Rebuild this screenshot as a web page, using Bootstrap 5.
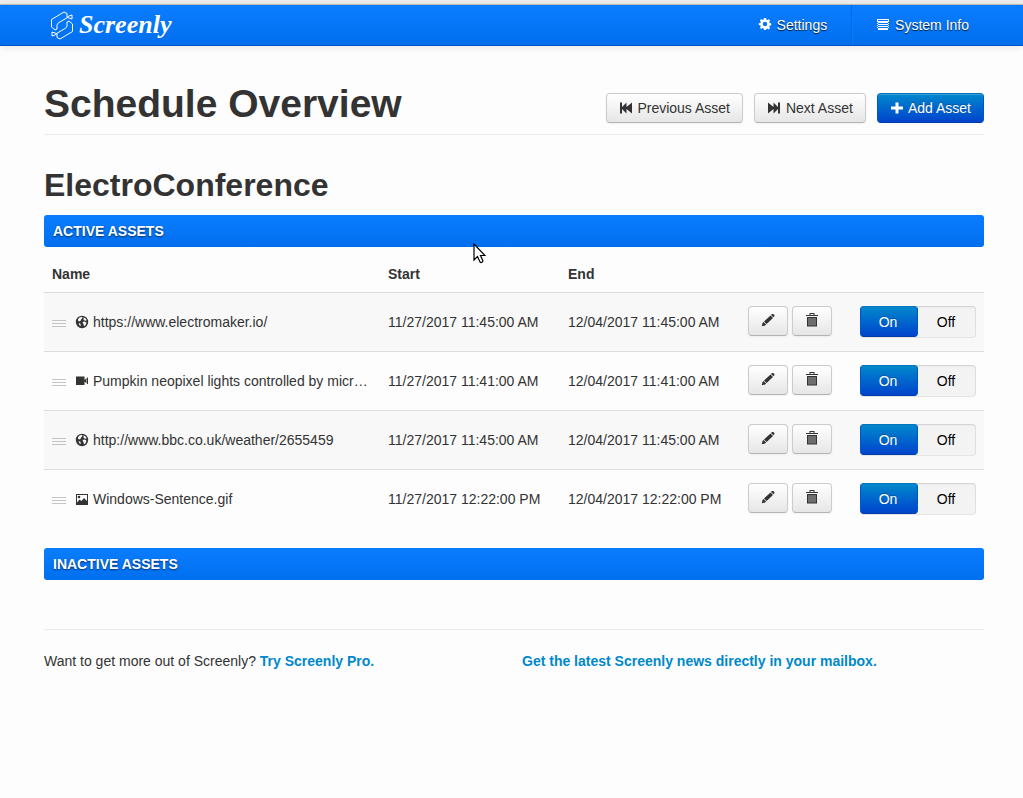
<!DOCTYPE html>
<html lang="en">
<head>
<meta charset="utf-8">
<meta name="viewport" content="width=device-width, initial-scale=1">
<title>Screenly - Schedule Overview</title>
<link rel="stylesheet" href="https://cdn.jsdelivr.net/npm/bootstrap@5.3.0/dist/css/bootstrap.min.css">
<style>
body { font-family: "Liberation Sans", Arial, sans-serif; font-size: 14px; line-height: 20px; color: #333; background: #fdfdfd; }
.page-wrap { padding-left: 44px; padding-right: 39px; }
.window-edge { height: 5px; background: #ededed; border-bottom: 1px solid #c3beb6; }
.topbar { height: 41px; background: linear-gradient(#0a7dff, #006fee); border-bottom: 1px solid #0052c4; box-shadow: 0 1px 8px rgba(0,0,0,.1); }
.topbar .nav-link { padding: 10px 15px; color: #fff; text-shadow: 0 1px 1px rgba(0,0,0,.8); }
.nav-split { width: 2px; margin: 0 9px; border-left: 1px solid #0069e4; border-right: 1px solid #0a7bfb; }
.brand { margin-left: 6px; color: #fff; gap: 5px; }
.brand-name { font: italic 700 26px/34px "Liberation Serif", serif; }
.ico { width: 14px; height: 14px; fill: currentColor; vertical-align: -2px; flex: none; }
.topbar .ico { vertical-align: -1px; margin-left: -1px; margin-right: 1px; }
.page-head { margin-top: 38px; padding-bottom: 10px; border-bottom: 1px solid #ebebeb; }
h1 { font-size: 39px; line-height: 40px; font-weight: 700; }
h2 { font-size: 32px; line-height: 40px; font-weight: 700; margin: 30px 0 10px; }
.head-actions { gap: 11px; margin-bottom: 1px; }
.head-actions .ico { margin-right: 1px; }
.btn { --bs-btn-font-size: 14px; --bs-btn-line-height: 20px; --bs-btn-padding-y: 4px; --bs-btn-padding-x: 12px; --bs-btn-border-radius: 4px; }
.btn-plain { --bs-btn-color: #333; --bs-btn-hover-color: #333; border-color: #ccc #ccc #b3b3b3; background: linear-gradient(#fff, #e6e6e6); box-shadow: inset 0 1px 0 #fff, 0 1px 2px rgba(0,0,0,.05); }
.btn-blue { --bs-btn-color: #fff; --bs-btn-hover-color: #fff; border-color: #0074bd #0055cc #003ca8; background: linear-gradient(#0088cc, #0044cc); text-shadow: 0 -1px 0 rgba(0,0,0,.25); box-shadow: inset 0 1px 0 rgba(255,255,255,.2); }
.section-bar { margin: 0; padding: 6px 9px; border-radius: 3px; font-size: 14px; line-height: 20px; font-weight: 700; color: #fff; background: linear-gradient(#0a7dff, #006fee); text-shadow: 0 1px 2px rgba(0,0,0,.6); }
.assets { table-layout: fixed; margin: 9px 0 19px; --bs-table-bg: transparent; color: #333; }
.assets th, .assets td { padding: 8px; vertical-align: middle; color: #333; border: 0; }
.assets tbody td { height: 59px; border-top: 1px solid #ddd; }
.assets tbody tr:nth-child(odd) td { background: #f8f8f8; }
.col-date { width: 180px; } .col-tools { width: 112px; } .col-state { width: 132px; }
.grip { width: 14px; height: 8px; fill: #c4c4c4; margin: 3px 9px 0 0; flex: none; }
.asset-name { margin-left: 4px; }
.tools { gap: 4px; margin-right: -8px; margin-bottom: 2px; }
.tools .ico { vertical-align: -1px; }
.switch { width: 116px; border-radius: 4px; background: #f3f3f3; box-shadow: inset 0 1px 2px rgba(0,0,0,.1), inset 0 0 0 1px rgba(0,0,0,.05); padding-bottom: 1px; }
.switch .btn { flex: 1 1 0; color: #000; padding: 5px 2px 4px 0; border-color: transparent; }
.switch .btn-check:checked + .btn { color: #fff; border-color: #0074bd #0055cc #003ca8; border-radius: 4px; background: linear-gradient(#0088cc, #0044cc); text-shadow: 0 -1px 0 rgba(0,0,0,.25); }
.pointer { left: 46%; top: 28px; width: 13px; height: 21px; margin-left: -3px; }
.foot { margin-top: 49px; padding-top: 21px; border-top: 1px solid #ebebeb; }
.foot a { color: #0088cc; font-weight: 700; text-decoration: none; }
</style>
</head>
<body>
<svg class="d-none" aria-hidden="true">
  <symbol id="gear" viewBox="0 0 14 14"><path fill-rule="evenodd" d="M6 1h2l.4 1.700 1 .4 1.500-.9 1.200 1.300-.9 1.400.5 1.100 1.500.4v1.900l-1.600.4-.4 1 .9 1.400-1.300 1.300-1.400-.9-1 .4L8 13H6l-.4-1.600-1-.4-1.500.9-1.200-1.300.9-1.400-.4-1L.8 7.900V6.300l1.600-.4.4-1-.9-1.500 1.300-1.300 1.400.9 1-.4zM7 4.800a2.200 2.200 0 1 0 0 4.400 2.200 2.200 0 0 0 0-4.400z"/></symbol>
  <symbol id="rows" viewBox="0 0 14 14"><path fill-rule="evenodd" d="M1 2h12v3H1zM2 3v1h10V3zM1 5h12v1H1zM1 7h12v1H1zM1 9h12v1H1zM1 11h12v2H1zM1 5h1v8H1zM12 5h1v8h-1z"/></symbol>
  <symbol id="back" viewBox="0 0 14 14"><path d="M1 1.500h2v4.600L7.500 1.500v4.600L13 1.500v11L7.500 7.900v4.600L3 7.900v4.600H1z"/></symbol>
  <symbol id="next" viewBox="0 0 14 14"><path d="M13 1.500h-2v4.600L6.500 1.500v4.600L1 1.500v11l5.500-4.600v4.600L11 7.900v4.600h2z"/></symbol>
  <symbol id="plus" viewBox="0 0 14 14"><path d="M5.500 1.500h3v4H13v3H8.500v4h-3v-4H1v-3h4.500z"/></symbol>
  <symbol id="globe" viewBox="0 0 14 14"><circle cx="7" cy="7" r="6.200"/><path fill="#f8f8f8" d="M4.500 2.500 7 1.800 7.500 3 6 4.500 5.500 6 4 6.500 3 5.500 3 4.300zM8.500 2.200l2.200 1.200 1 1.800-1.500.5-1.500-.7zM7.500 7l2.500-.5 1.500 1.200-1 2.500-1.500 1-.5-2zM3.500 8l2 .8L5.800 11 4.500 10.500z"/></symbol>
  <symbol id="video" viewBox="0 0 14 14"><path d="M1 2.500h8.500v8.500H1zM9.500 6l2-2v5.500l-2-2zM12 3.500h1V10h-1z"/></symbol>
  <symbol id="image" viewBox="0 0 14 14"><path fill-rule="evenodd" d="M1 2h12v11H1zM2 3v7.500l2.500-3 2 1.500L9 6l3 3V3zM4 3.700a1.300 1.300 0 1 1 0 2.600 1.300 1.300 0 0 1 0-2.600z"/></symbol>
  <symbol id="pencil" viewBox="0 0 14 14"><path d="M.8 13.200 1.500 10l1-1 2.600 2.500-1 1zM3 8.500 9.500 2.400 12 5 5.600 11zM10 1.900l1-1h1.200l1.200 1.200v1.200l-1 1z"/></symbol>
  <symbol id="trash" viewBox="0 0 14 14"><path d="M4.500 0h5v2H13v1H1V2h3.500zM5.500 1v1h3V1zM2 4h10v9.500H2z" fill-rule="evenodd"/><path fill="#aaa" d="M3.500 5h1v7.500h-1zM5.500 5h1v7.500h-1zM7.500 5h1v7.500h-1zM9.500 5h1v7.500h-1z"/></symbol>
  <symbol id="grip" viewBox="0 0 14 8"><path d="M0 0h14v1H0zM0 3h14v1H0zM0 6h14v1H0z"/></symbol>
</svg>

<div class="window-edge"></div>
<header class="topbar page-wrap d-flex justify-content-between">
  <a href="#" class="brand d-flex align-items-center text-decoration-none">
    <svg width="24" height="31" viewBox="0 0 24 31" fill="none" stroke="#fff" stroke-width="1" stroke-linejoin="round" aria-hidden="true">
      <path id="ribbon" d="M17.500 7.500 9 12.500q-2 1-2 3V19l-2 1-3.500-3V9.500L14 2l3 1.500v4l2-1.500 3-1v4l-3-1-1.500-.5"/>
      <use href="#ribbon" transform="rotate(180 12 15.500)"/>
    </svg>
    <span class="brand-name">Screenly</span>
  </a>
  <nav class="d-flex">
    <a class="nav-link" href="#"><svg class="ico"><use href="#gear"/></svg> Settings</a>
    <span class="nav-split"></span>
    <a class="nav-link" href="#"><svg class="ico"><use href="#rows"/></svg> System Info</a>
  </nav>
</header>

<main class="page-wrap">
  <div class="page-head d-flex justify-content-between align-items-end">
    <h1 class="m-0">Schedule Overview</h1>
    <div class="head-actions d-flex">
      <button type="button" class="btn btn-plain"><svg class="ico"><use href="#back"/></svg> Previous Asset</button>
      <button type="button" class="btn btn-plain"><svg class="ico"><use href="#next"/></svg> Next Asset</button>
      <button type="button" class="btn btn-blue"><svg class="ico"><use href="#plus"/></svg> Add Asset</button>
    </div>
  </div>

  <h2>ElectroConference</h2>
  <section class="position-relative">
    <h3 class="section-bar">ACTIVE ASSETS</h3>
    <svg class="pointer position-absolute" viewBox="0 0 13 21" aria-hidden="true"><path d="M1 1v16l3.500-3.500L7 19q1.500 1.500 3-1l-2.500-5.500H12z" fill="#fff" stroke="#000" stroke-width="1.200"/></svg>
    <table class="table assets">
      <thead>
        <tr><th>Name</th><th class="col-date">Start</th><th class="col-date">End</th><th class="col-tools"></th><th class="col-state"></th></tr>
      </thead>
      <tbody id="active-assets"></tbody>
    </table>
  </section>
  <section>
    <h3 class="section-bar">INACTIVE ASSETS</h3>
  </section>

  <footer class="foot row gx-0">
    <div class="col-6">Want to get more out of Screenly? <a href="#">Try Screenly Pro.</a></div>
    <div class="col-6 ps-2"><a href="#">Get the latest Screenly news directly in your mailbox.</a></div>
  </footer>
</main>
<script>
const assets = [
  ["globe", "https://www.electromaker.io/", "11/27/2017 11:45:00 AM", "12/04/2017 11:45:00 AM"],
  ["video", "Pumpkin neopixel lights controlled by micr…", "11/27/2017 11:41:00 AM", "12/04/2017 11:41:00 AM"],
  ["globe", "http://www.bbc.co.uk/weather/2655459", "11/27/2017 11:45:00 AM", "12/04/2017 11:45:00 AM"],
  ["image", "Windows-Sentence.gif", "11/27/2017 12:22:00 PM", "12/04/2017 12:22:00 PM"]
];
document.getElementById("active-assets").innerHTML = assets.map(([icon, name, start, end], i) => `
  <tr>
    <td><div class="d-flex align-items-center"><svg class="grip"><use href="#grip"/></svg><svg class="ico"><use href="#${icon}"/></svg><span class="asset-name text-nowrap">${name}</span></div></td>
    <td class="text-nowrap">${start}</td>
    <td class="text-nowrap">${end}</td>
    <td><div class="tools d-flex">
      <button type="button" class="btn btn-plain" aria-label="Edit"><svg class="ico"><use href="#pencil"/></svg></button>
      <button type="button" class="btn btn-plain" aria-label="Delete"><svg class="ico"><use href="#trash"/></svg></button>
    </div></td>
    <td><div class="switch d-flex">
      <input type="radio" class="btn-check" name="state${i}" id="on${i}" checked><label class="btn" for="on${i}">On</label>
      <input type="radio" class="btn-check" name="state${i}" id="off${i}"><label class="btn" for="off${i}">Off</label>
    </div></td>
  </tr>`).join("");
</script>
<script src="https://cdn.jsdelivr.net/npm/bootstrap@5.3.0/dist/js/bootstrap.bundle.min.js"></script>
</body>
</html>
